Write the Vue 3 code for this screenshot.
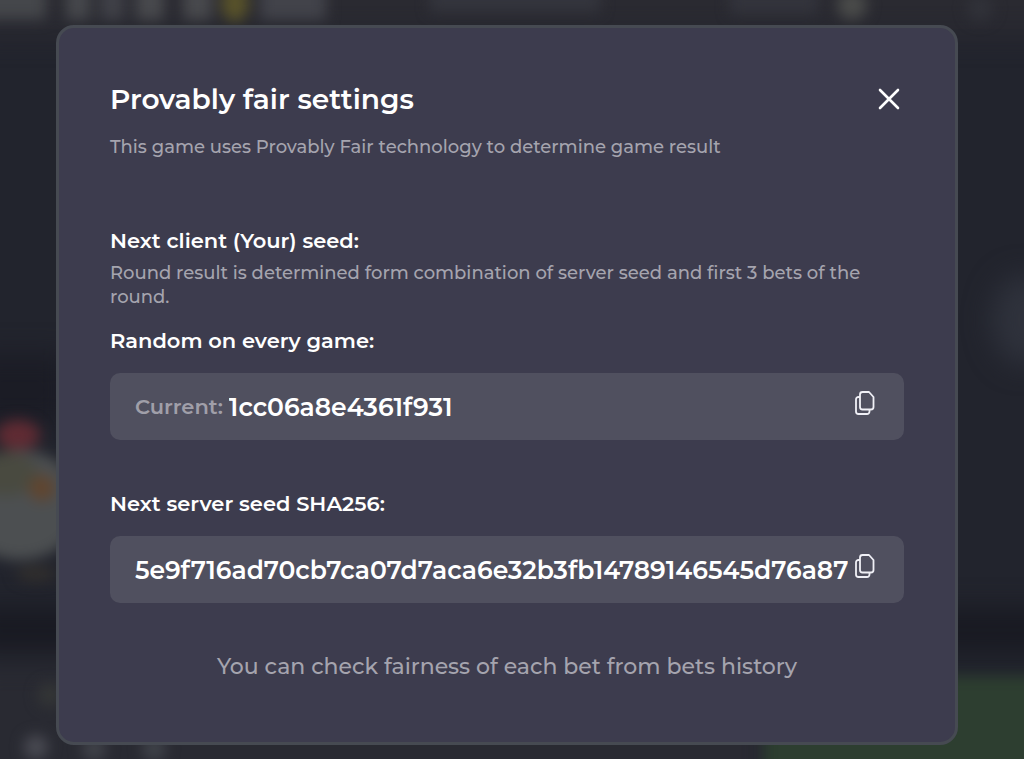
<script setup>
import { ref } from 'vue'

const clientSeed = ref('1cc06a8e4361f931')
const serverSeed = ref('5e9f716ad70cb7ca07d7aca6e32b3fb14789146545d76a87')
const open = ref(true)

function copy(value) {
  navigator.clipboard?.writeText(value)
}
</script>

<template>
  <main class="page">
    <svg class="scene" viewBox="0 0 1024 759" preserveAspectRatio="xMidYMid slice" aria-hidden="true">
      <defs>
        <filter id="soft" x="-50%" y="-50%" width="200%" height="200%" color-interpolation-filters="sRGB"><feGaussianBlur stdDeviation="7" /></filter>
        <filter id="haze" x="-50%" y="-50%" width="200%" height="200%" color-interpolation-filters="sRGB"><feGaussianBlur stdDeviation="14" /></filter>
      </defs>
      <rect width="1024" height="759" fill="#22242d" />
      <g filter="url(#haze)">
        <rect x="-30" y="-30" width="1084" height="65" fill="#2a2a31" />
        <rect x="-30" y="355" width="100" height="70" fill="#1b1c25" />
        <ellipse cx="1024" cy="320" rx="32" ry="45" fill="#2f323c" />
        <rect x="-30" y="610" width="1084" height="40" fill="#181921" />
        <rect x="-30" y="662" width="800" height="140" fill="#292a32" />
      </g>
      <g filter="url(#soft)">
        <rect x="-20" y="-20" width="66" height="39" fill="#45474b" />
        <rect x="66" y="-20" width="24" height="40" fill="#46484c" />
        <rect x="100" y="-20" width="24" height="40" fill="#404148" />
        <rect x="136" y="-20" width="28" height="40" fill="#48494d" />
        <rect x="183" y="-20" width="29" height="40" fill="#48494d" />
        <ellipse cx="235" cy="3" rx="14" ry="19" fill="#58522a" />
        <rect x="260" y="-20" width="66" height="40" fill="#42434a" />
        <rect x="430" y="-20" width="170" height="32" fill="#34353d" />
        <rect x="730" y="-20" width="88" height="34" fill="#33343c" />
        <circle cx="852" cy="5" r="15" fill="#4a4b4a" />
        <circle cx="980" cy="8" r="13" fill="#313239" />
        <ellipse cx="20" cy="505" rx="62" ry="55" fill="#4c4f51" />
        <ellipse cx="6" cy="474" rx="32" ry="22" fill="#494a40" />
        <ellipse cx="18" cy="435" rx="22" ry="15" fill="#602b33" />
        <circle cx="42" cy="488" r="13" fill="#60452f" />
        <ellipse cx="36" cy="574" rx="20" ry="7" fill="#33302d" />
        <rect x="764" y="676" width="300" height="120" fill="#2d3e30" />
        <circle cx="36" cy="747" r="12" fill="#4a4b53" />
        <circle cx="94" cy="749" r="12" fill="#41434a" />
        <circle cx="154" cy="749" r="12" fill="#40434a" />
        <circle cx="50" cy="695" r="12" fill="#343636" />
      </g>
    </svg>

    <section v-if="open" class="dialog" role="dialog" aria-modal="true" aria-labelledby="title">
      <header class="head">
        <h1 id="title">Provably fair settings</h1>
        <button class="icon-button" type="button" aria-label="Close" @click="open = false">
          <svg width="22" height="22" viewBox="0 0 22 22" fill="none" stroke="#fff" stroke-width="2.6" stroke-linecap="round">
            <path d="M2 2 20 20M20 2 2 20" />
          </svg>
        </button>
      </header>
      <p class="intro">This game uses Provably Fair technology to determine game result</p>

      <h2>Next client (Your) seed:</h2>
      <p class="note">Round result is determined form combination of server seed and first 3 bets of the round.</p>

      <label class="label" for="client-seed">Random on every game:</label>
      <div class="field client">
        <span class="prefix">Current:</span>
        <input id="client-seed" v-model="clientSeed" readonly />
        <button class="icon-button" type="button" aria-label="Copy client seed" @click="copy(clientSeed)">
          <svg width="22" height="26" viewBox="0 0 22 26" fill="none" stroke="#f0f0f6" stroke-width="1.8" stroke-linejoin="round">
            <path d="M8.500 2H15l4.500 5v10a2.500 2.500 0 0 1-2.500 2.500H8.500A2.500 2.500 0 0 1 6 17V4.500A2.500 2.500 0 0 1 8.500 2Z" />
            <path d="M6 7H4.500A2.500 2.500 0 0 0 2 9.500v12A2.500 2.500 0 0 0 4.500 24H13a2.500 2.500 0 0 0 2.500-2.500v-2" />
          </svg>
        </button>
      </div>

      <label class="label" for="server-seed">Next server seed SHA256:</label>
      <div class="field">
        <input id="server-seed" v-model="serverSeed" readonly />
        <button class="icon-button" type="button" aria-label="Copy server seed" @click="copy(serverSeed)">
          <svg width="22" height="26" viewBox="0 0 22 26" fill="none" stroke="#f0f0f6" stroke-width="1.8" stroke-linejoin="round">
            <path d="M8.500 2H15l4.500 5v10a2.500 2.500 0 0 1-2.500 2.500H8.500A2.500 2.500 0 0 1 6 17V4.500A2.500 2.500 0 0 1 8.500 2Z" />
            <path d="M6 7H4.500A2.500 2.500 0 0 0 2 9.500v12A2.500 2.500 0 0 0 4.500 24H13a2.500 2.500 0 0 0 2.500-2.500v-2" />
          </svg>
        </button>
      </div>

      <p class="footer">You can check fairness of each bet from bets history</p>
    </section>
  </main>
</template>

<style>
body {
  margin: 0;
  background: #22242d;
}
</style>

<style scoped>
.page {
  position: relative;
  box-sizing: border-box;
  min-height: 100vh;
  padding: 25px 66px 14px 56px;
  overflow: hidden;
  font-family: Montserrat, Inter, sans-serif;
  color: #fff;
}
.scene {
  position: absolute;
  inset: 0;
  width: 100%;
  height: 100%;
}
.dialog {
  position: relative;
  box-sizing: border-box;
  padding: 51px 51px 61px;
  border: 3px solid #464a52;
  border-radius: 18px;
  background: #3d3c4e;
}
.head {
  display: flex;
  align-items: center;
  justify-content: space-between;
  padding-right: 4px;
}
h1, h2, p {
  margin: 0;
}
h1 {
  font-size: 28px;
  font-weight: 600;
  line-height: 40px;
}
h2, .label {
  display: block;
  font-size: 21px;
  font-weight: 600;
  line-height: 28px;
}
.intro, .note {
  color: #a5a4ae;
  font-size: 18px;
  font-weight: 500;
  line-height: 24px;
}
.intro {
  margin: 16px 0 68px;
}
.note {
  margin: 6px 0 18px;
}
.field {
  display: flex;
  align-items: center;
  margin-top: 18px;
  padding: 0 28px 0 25px;
  border-radius: 10px;
  background: #50505f;
}
.client {
  margin-bottom: 50px;
}
.prefix {
  margin-right: 6px;
  color: #a09fa9;
  font-size: 21px;
  font-weight: 600;
}
input {
  flex: 1;
  min-width: 0;
  height: 67px;
  padding: 0;
  border: 0;
  outline: 0;
  background: transparent;
  color: #fff;
  font: inherit;
  font-size: 25px;
  font-weight: 600;
}
.icon-button {
  display: flex;
  padding: 0;
  border: 0;
  background: transparent;
  cursor: pointer;
}
.field .icon-button {
  margin: 0 0 8px 6px;
}
.footer {
  margin-top: 50px;
  color: #a5a4ae;
  font-size: 22px;
  font-weight: 500;
  line-height: 28px;
  text-align: center;
}
</style>
